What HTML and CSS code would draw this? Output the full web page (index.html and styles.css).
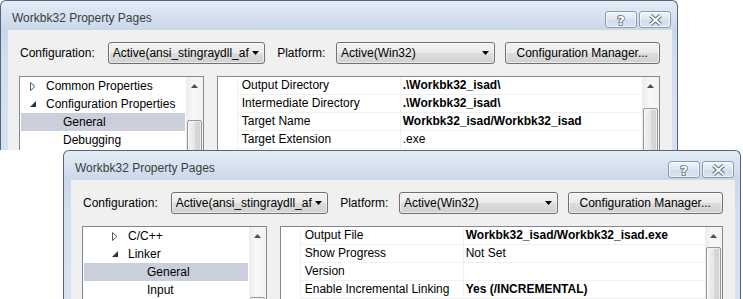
FILE: index.html
```html
<!DOCTYPE html>
<html lang="en">
<head>
<meta charset="utf-8">
<title>Workbk32 Property Pages</title>
<link rel="stylesheet" href="styles.css">
</head>
<body>
  <!-- back window, cut off where the front one was pasted -->
  <div class="win win-back">
    <div class="caption">
      <span class="caption-text">Workbk32 Property Pages</span>
      <div class="caption-btns">
        <span class="cbtn"><svg width="12" height="13" viewBox="0 0 12 13"><text x="6" y="11.5" text-anchor="middle" class="help-glyph">?</text></svg></span>
        <span class="cbtn"><svg width="15" height="12" viewBox="0 0 15 12"><path d="M2.5 1.5 L12.5 10.5 M12.5 1.5 L2.5 10.5" class="x-out"/><path d="M2.5 1.5 L12.5 10.5 M12.5 1.5 L2.5 10.5" class="x-in"/></svg></span>
      </div>
    </div>
    <div class="client">
      <div class="toolbar">
        <label class="lbl lbl-config">Configuration:</label>
        <div class="combo combo-config"><span class="combo-text">Active(ansi_stingraydll_af</span><svg class="drop" width="7" height="4" viewBox="0 0 7 4"><path d="M0 0 H7 L3.5 4 Z"/></svg></div>
        <label class="lbl lbl-platform">Platform:</label>
        <div class="combo combo-platform"><span class="combo-text">Active(Win32)</span><svg class="drop" width="7" height="4" viewBox="0 0 7 4"><path d="M0 0 H7 L3.5 4 Z"/></svg></div>
        <button class="btn">Configuration Manager...</button>
      </div>
      <div class="panes">
        <div class="tree">
          <ul class="tree-list">
            <li class="node l1"><span class="tw"><svg width="6" height="9" viewBox="0 0 6 9"><path d="M0.5 0.5 L5 4.5 L0.5 8.5 Z" class="tw-closed"/></svg></span>Common Properties</li>
            <li class="node l1"><span class="tw"><svg width="6" height="6" viewBox="0 0 6 6"><path d="M6 0 V6 H0 Z" class="tw-open"/></svg></span>Configuration Properties</li>
            <li class="node leaf2 sel">General</li>
            <li class="node leaf2">Debugging</li>
          </ul>
          <div class="vscroll">
            <div class="sb-up"><svg width="7" height="4" viewBox="0 0 7 4"><path d="M3.5 0 L7 4 H0 Z"/></svg></div>
            <div class="thumb thumb-tree-back"></div>
          </div>
        </div>
        <div class="grid">
          <div class="gutter"></div>
          <div class="rows">
            <div class="row"><div class="name">Output Directory</div><div class="val b">.\Workbk32_isad\</div></div>
            <div class="row"><div class="name">Intermediate Directory</div><div class="val b">.\Workbk32_isad\</div></div>
            <div class="row"><div class="name">Target Name</div><div class="val b">Workbk32_isad/Workbk32_isad</div></div>
            <div class="row"><div class="name">Target Extension</div><div class="val">.exe</div></div>
          </div>
          <div class="vscroll">
            <div class="sb-up"><svg width="7" height="4" viewBox="0 0 7 4"><path d="M3.5 0 L7 4 H0 Z"/></svg></div>
            <div class="thumb thumb-grid-back"></div>
          </div>
        </div>
      </div>
    </div>
  </div>

  <!-- front window -->
  <div class="win win-front">
    <div class="caption">
      <span class="caption-text">Workbk32 Property Pages</span>
      <div class="caption-btns">
        <span class="cbtn"><svg width="12" height="13" viewBox="0 0 12 13"><text x="6" y="11.5" text-anchor="middle" class="help-glyph">?</text></svg></span>
        <span class="cbtn"><svg width="15" height="12" viewBox="0 0 15 12"><path d="M2.5 1.5 L12.5 10.5 M12.5 1.5 L2.5 10.5" class="x-out"/><path d="M2.5 1.5 L12.5 10.5 M12.5 1.5 L2.5 10.5" class="x-in"/></svg></span>
      </div>
    </div>
    <div class="client">
      <div class="toolbar">
        <label class="lbl lbl-config">Configuration:</label>
        <div class="combo combo-config"><span class="combo-text">Active(ansi_stingraydll_af</span><svg class="drop" width="7" height="4" viewBox="0 0 7 4"><path d="M0 0 H7 L3.5 4 Z"/></svg></div>
        <label class="lbl lbl-platform">Platform:</label>
        <div class="combo combo-platform"><span class="combo-text">Active(Win32)</span><svg class="drop" width="7" height="4" viewBox="0 0 7 4"><path d="M0 0 H7 L3.5 4 Z"/></svg></div>
        <button class="btn">Configuration Manager...</button>
      </div>
      <div class="panes">
        <div class="tree">
          <ul class="tree-list">
            <li class="node l2"><span class="tw"><svg width="6" height="9" viewBox="0 0 6 9"><path d="M0.5 0.5 L5 4.5 L0.5 8.5 Z" class="tw-closed"/></svg></span>C/C++</li>
            <li class="node l2"><span class="tw"><svg width="6" height="6" viewBox="0 0 6 6"><path d="M6 0 V6 H0 Z" class="tw-open"/></svg></span>Linker</li>
            <li class="node leaf3 sel">General</li>
            <li class="node leaf3">Input</li>
          </ul>
          <div class="vscroll">
            <div class="sb-up"><svg width="7" height="4" viewBox="0 0 7 4"><path d="M3.5 0 L7 4 H0 Z"/></svg></div>
            <div class="thumb thumb-tree-front"></div>
          </div>
        </div>
        <div class="grid">
          <div class="gutter"></div>
          <div class="rows">
            <div class="row"><div class="name">Output File</div><div class="val b">Workbk32_isad/Workbk32_isad.exe</div></div>
            <div class="row"><div class="name">Show Progress</div><div class="val">Not Set</div></div>
            <div class="row"><div class="name">Version</div><div class="val"></div></div>
            <div class="row"><div class="name">Enable Incremental Linking</div><div class="val b">Yes (/INCREMENTAL)</div></div>
          </div>
          <div class="vscroll">
            <div class="sb-up"><svg width="7" height="4" viewBox="0 0 7 4"><path d="M3.5 0 L7 4 H0 Z"/></svg></div>
            <div class="thumb thumb-grid-front"></div>
          </div>
        </div>
      </div>
    </div>
  </div>
</body>
</html>
```

FILE: styles.css
```css
* {
  box-sizing: border-box;
}

html, body {
  margin: 0;
  padding: 0;
}

body {
  position: relative;
  width: 743px;
  height: 299px;
  overflow: hidden;
  background: #fff;
  font-family: "Liberation Sans", Arial, sans-serif;
  font-size: 12px;
  color: #000;
}

/* window frame */
.win {
  position: absolute;
  width: 678px;
  border: 1px solid #56657a;
  border-radius: 6px 6px 0 0;
  background: linear-gradient(#e4ecf6 0, #c9d8ea 29px, #d2dfee 60px, #d6e2f0 100%);
  padding: 0 5px 0 7px;
  display: flex;
  flex-direction: column;
  overflow: hidden;
}
.win-back {
  left: 0;
  top: 0;
  height: 150px;
  border-bottom: 0;
}
.win-front {
  left: 63px;
  top: 150px;
  height: 149px;
  border-bottom: 0;
}

.caption {
  height: 29px;
  display: flex;
  align-items: flex-start;
  justify-content: space-between;
  flex: none;
}
.caption-text {
  padding: 10px 0 0 4px;
  color: #3c3c3c;
  line-height: 15px;
}
.caption-btns {
  display: flex;
  gap: 2px;
  padding-top: 10px;
  margin-right: 1px;
}
.cbtn {
  width: 32px;
  height: 17px;
  border: 1px solid #8a9bb1;
  border-radius: 3px;
  background: linear-gradient(#f1f5fa, #dbe5f1 50%, #cfdcec 51%, #d9e4f1);
  box-shadow: inset 0 0 0 1px rgba(255,255,255,0.6);
  display: flex;
  align-items: center;
  justify-content: center;
}
.help-glyph {
  font-family: "DejaVu Sans", sans-serif;
  font-size: 13px;
  font-weight: bold;
  fill: #fff;
  stroke: #5d6b7e;
  stroke-width: 1.6px;
  paint-order: stroke;
}
.x-out {
  stroke: #5d6b7e;
  stroke-width: 4;
  fill: none;
}
.x-in {
  stroke: #fff;
  stroke-width: 2;
  fill: none;
}

/* client area */
.client {
  flex: none;
  height: 300px;
  background: #f0f0f0;
  padding: 12px 12px 0 11px;
  display: flex;
  flex-direction: column;
}

.toolbar {
  display: flex;
  align-items: center;
  height: 22px;
  flex: none;
}
.lbl {
  padding-left: 1px;
}
.lbl-config {
  width: 89px;
}
.lbl-platform {
  width: 60px;
  margin-left: 11px;
}

.combo, .btn {
  height: 22px;
  border: 1px solid #707070;
  border-radius: 3px;
  background: linear-gradient(#f3f3f3 0, #ebebeb 50%, #dddddd 51%, #d0d0d0 100%);
  box-shadow: inset 0 0 0 1px rgba(255,255,255,0.55);
}
.combo {
  display: flex;
  align-items: center;
  padding: 0 5px 0 4px;
}
.combo-config {
  width: 158px;
}
.combo-platform {
  width: 159px;
}
.combo-text {
  flex: 1;
  overflow: hidden;
  white-space: nowrap;
}
.drop {
  flex: none;
  margin-left: 2px;
}
.drop path {
  fill: #000;
}
.btn {
  width: 156px;
  margin-left: 10px;
  font: inherit;
  color: #000;
  padding: 0;
}

/* tree + grid */
.panes {
  margin-top: 12px;
  height: 240px;
  flex: none;
  display: flex;
  gap: 13px;
}
.tree {
  width: 185px;
  border: 1px solid #828790;
  background: #fff;
  display: flex;
}
.tree-list {
  list-style: none;
  margin: 0;
  padding: 0 1px 0 1px;
  flex: 1;
}
.node {
  height: 18px;
  display: flex;
  align-items: center;
  white-space: nowrap;
}
.node.sel {
  background: #cbcfdc;
}
.l1 {
  padding-left: 9px;
}
.l2 {
  padding-left: 28px;
}
.leaf2 {
  padding-left: 42px;
}
.leaf3 {
  padding-left: 63px;
}
.tw {
  width: 16px;
  display: flex;
  align-items: center;
}
.tw-closed {
  fill: #fff;
  stroke: #595959;
  stroke-width: 1;
}
.tw-open {
  fill: #333;
}

.grid {
  width: 444px;
  border: 1px solid #828790;
  background: #fff;
  display: flex;
}
.gutter {
  width: 20px;
  border-right: 1px solid #f0f0f0;
}
.rows {
  flex: 1;
}
.row {
  height: 18px;
  display: flex;
  border-bottom: 1px solid #f0f0f0;
}
.name {
  width: 163px;
  padding-left: 4px;
  border-right: 1px solid #f0f0f0;
  line-height: 17px;
  white-space: nowrap;
  overflow: hidden;
}
.val {
  flex: 1;
  padding-left: 2px;
  line-height: 17px;
  white-space: nowrap;
  overflow: hidden;
}
.val.b {
  font-weight: bold;
}

/* scrollbar */
.vscroll {
  width: 17px;
  flex: none;
  background: linear-gradient(to right, #ececec, #f7f7f7 40%, #f3f3f3);
  display: flex;
  flex-direction: column;
}
.sb-up {
  height: 17px;
  display: flex;
  align-items: center;
  justify-content: center;
}
.sb-up path {
  fill: #4f4f4f;
}
.thumb {
  margin: 0 1px;
  height: 120px;
  border: 1px solid #979797;
  border-radius: 2px;
  background: linear-gradient(to right, #f4f4f4, #e6e6e6 50%, #d9d9d9 51%, #d2d2d2);
  box-shadow: inset 0 0 0 1px rgba(255,255,255,0.6);
}
.thumb-tree-back {
  margin-top: 26px;
}
.thumb-grid-back {
  margin-top: 14px;
}
.thumb-tree-front {
  margin-top: 53px;
}
.thumb-grid-front {
  margin-top: 3px;
}
```
